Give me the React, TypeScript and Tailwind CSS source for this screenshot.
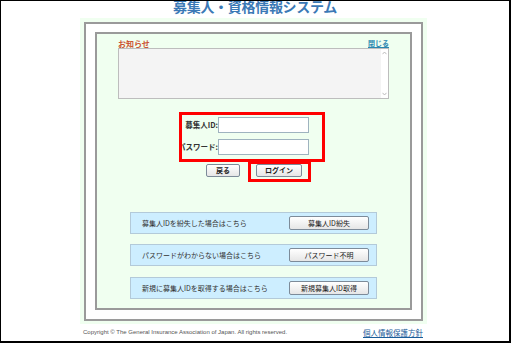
const btn =
  "flex items-center justify-center border border-[#7d8b99] rounded-[2px] bg-gradient-to-b from-white to-[#e6e6e6] text-[7px] leading-none text-[#222]";

const rows = [
  { text: "募集人IDを紛失した場合はこちら", label: "募集人ID紛失", mt: "mt-[30px]" },
  { text: "パスワードがわからない場合はこちら", label: "パスワード不明", mt: "mt-[10px]" },
  { text: "新規に募集人IDを取得する場合はこちら", label: "新規募集人ID取得", mt: "mt-[11px]" },
];

const Chevron = ({ up }: { up?: boolean }) => (
  <svg width="5" height="4" viewBox="0 0 5 4">
    <path
      d={up ? "M0.5 3.2 L2.5 1 L4.5 3.2" : "M0.5 0.8 L2.5 3 L4.5 0.8"}
      fill="none"
      stroke="#b5b5b5"
      strokeWidth="0.9"
    />
  </svg>
);

const App = () => {
  return (
    <div
      className="w-[511px] h-[343px] bg-white border-black border-t border-l border-r-2 border-b-2 overflow-hidden"
      style={{ fontFamily: '"Noto Sans CJK JP", "Liberation Sans", sans-serif' }}
    >
      {/* タイトル */}
      <div className="h-[17px] flex justify-center">
        <div className="text-[14px] leading-[14px] font-bold text-[#3b79b6] mt-[-2px] tracking-[-0.3px]">
          募集人・資格情報システム
        </div>
      </div>

      <div className="ml-[79px] w-[347px] h-[306px] bg-[#f0fff0] pt-[4px] px-[4px] pb-[3px]">
        <div className="h-full border-2 border-[#9a9a9a] bg-white pt-[8px] pb-[9px] px-[9px]">
          <div className="h-full border-2 border-[#9a9a9a] bg-[#f0fff0] flex flex-col">
            {/* お知らせ */}
            <div className="h-[14px] px-[21px] flex items-end justify-between">
              <span className="text-[8px] leading-[9px] font-bold text-[#cc5533]">お知らせ</span>
              <span className="text-[7px] leading-[9px] font-bold text-[#2a86b0] underline">閉じる</span>
            </div>
            <div className="mx-[21px] h-[51px] border border-[#bdbdbd] bg-[#f4f4f4] flex justify-end">
              <div className="w-[7px] bg-white flex flex-col justify-between items-center py-[2px]">
                <Chevron up />
                <Chevron />
              </div>
            </div>

            {/* ログイン */}
            <div className="mt-[13px] ml-[82px] w-[146px] h-[50px] border-[3px] border-[#ff0000] flex flex-col">
              <div className="mt-[2px] flex items-center">
                <div className="w-[36px] overflow-hidden flex justify-end">
                  <span className="text-[7.5px] font-semibold text-[#333] whitespace-nowrap">募集人ID:</span>
                </div>
                <input className="w-[91px] h-[16px] border border-[#9fb3bf] bg-white outline-none" />
              </div>
              <div className="mt-[6px] flex items-center">
                <div className="w-[36px] overflow-hidden flex justify-end">
                  <span className="text-[7.5px] font-semibold text-[#333] whitespace-nowrap">パスワード:</span>
                </div>
                <input type="password" className="w-[91px] h-[16px] border border-[#9fb3bf] bg-white outline-none" />
              </div>
            </div>
            <div className="mt-[-1px] ml-[109px] flex items-start">
              <button className={`${btn} w-[34px] h-[13px] mt-[3px] font-semibold`}>戻る</button>
              <div className="ml-[8px] w-[63px] h-[21px] border-[3px] border-[#ff0000] pl-[5px]">
                <button className={`${btn} w-[46px] h-[13px] font-semibold`}>ログイン</button>
              </div>
            </div>

            {/* 各種手続き */}
            {rows.map((r) => (
              <div
                key={r.label}
                className={`${r.mt} mx-[33px] h-[22px] border border-[#b3cad9] bg-[#cdeeff] flex items-center pl-[11px] pr-[7px]`}
              >
                <span className="text-[7px] text-[#333] whitespace-nowrap">{r.text}</span>
                <button className={`${btn} ml-auto w-[80px] h-[14px]`}>{r.label}</button>
              </div>
            ))}
          </div>
        </div>
      </div>

      {/* フッター */}
      <div className="h-[17px] flex items-center pl-[82px] pr-[86px]">
        <span
          className="text-[6px] text-[#555] whitespace-nowrap"
          style={{ fontFamily: '"Liberation Sans", sans-serif' }}
        >
          Copyright © The General Insurance Association of Japan. All rights reserved.
        </span>
        <span className="ml-auto text-[7.5px] text-[#1a5c99] underline whitespace-nowrap">
          個人情報保護方針
        </span>
      </div>
    </div>
  );
};

export default App;
